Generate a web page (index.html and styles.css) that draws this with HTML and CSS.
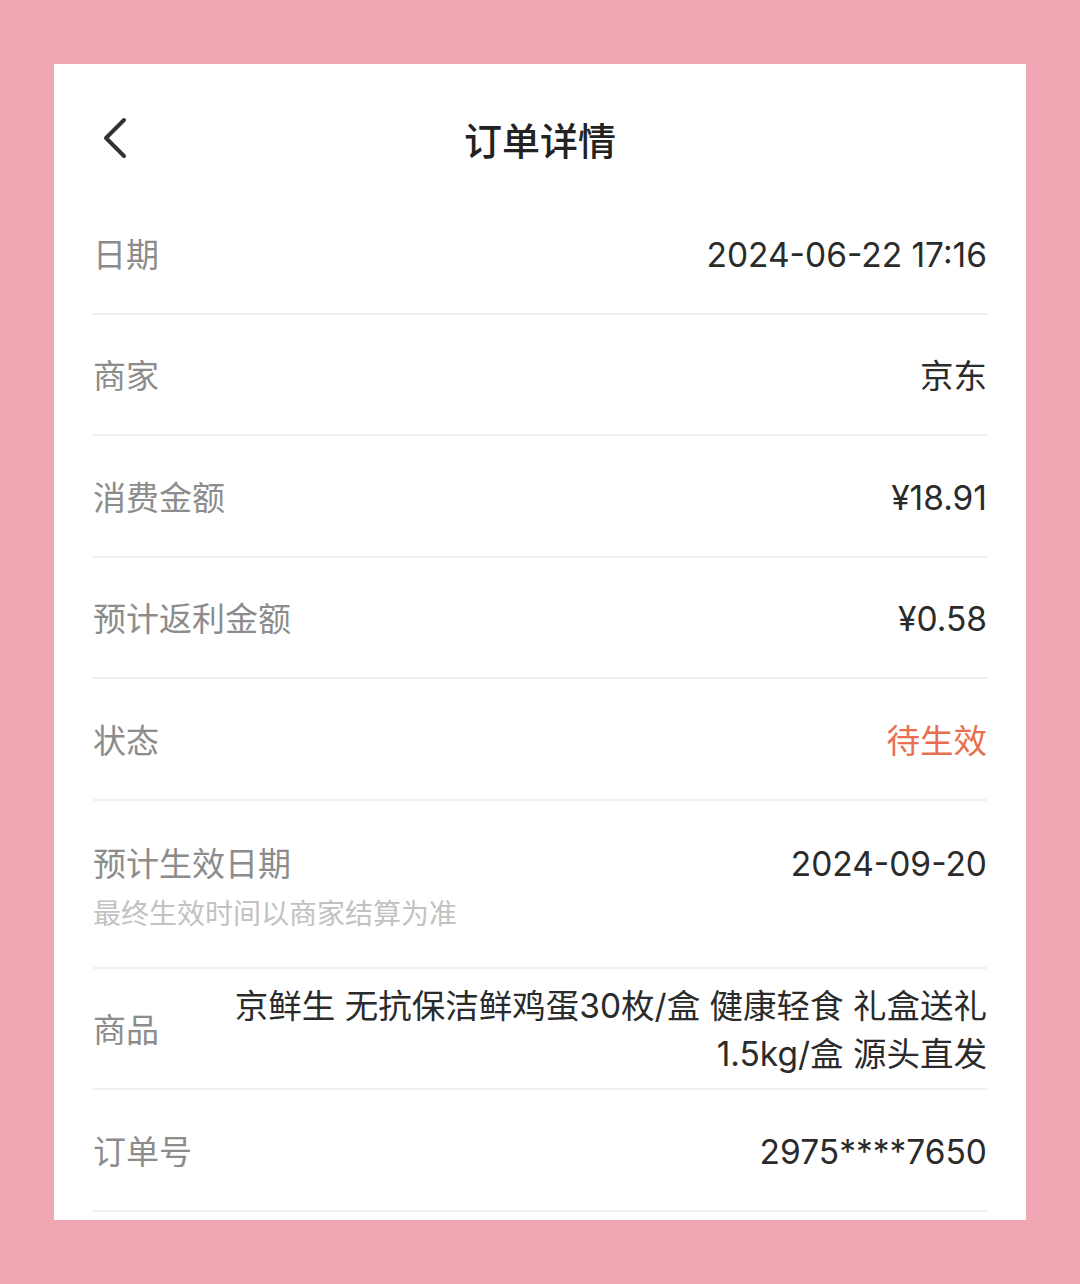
FILE: index.html
```html
<!DOCTYPE html>
<html lang="zh-CN">
<head>
<meta charset="utf-8">
<title>订单详情</title>
<link rel="stylesheet" href="styles.css">
</head>
<body>
<div class="card">
  <div class="header">
    <div class="back">
      <svg width="30" height="44" viewBox="0 0 30 44"><polyline points="23,4 5,22 23,40" fill="none" stroke="#333" stroke-width="4" stroke-linecap="round" stroke-linejoin="round"/></svg>
    </div>
    <div class="title">订单详情</div>
    <div></div>
  </div>
  <div class="row"><div class="label">日期</div><div class="value">2024-06-22 17:16</div></div>
  <div class="row"><div class="label">商家</div><div class="value">京东</div></div>
  <div class="row"><div class="label">消费金额</div><div class="value">¥18.91</div></div>
  <div class="row"><div class="label">预计返利金额</div><div class="value">¥0.58</div></div>
  <div class="row"><div class="label">状态</div><div class="value status">待生效</div></div>
  <div class="row row-tall"><div class="label-group"><div class="label">预计生效日期</div><div class="sub">最终生效时间以商家结算为准</div></div><div class="value">2024-09-20</div></div>
  <div class="row"><div class="label">商品</div><div class="value product">京鲜生 无抗保洁鲜鸡蛋30枚/盒 健康轻食 礼盒送礼 1.5kg/盒 源头直发</div></div>
  <div class="row"><div class="label">订单号</div><div class="value">2975****7650</div></div>
</div>
</body>
</html>
```
FILE: styles.css
```css
html, body { margin: 0; padding: 0; }
body {
  background: #f0a7b3;
  font-family: "Noto Sans CJK SC", sans-serif;
  width: 1080px;
  height: 1284px;
  overflow: hidden;
}
.card {
  margin: 64px 0 0 54px;
  width: 972px;
  height: 1156px;
  background: #fff;
  padding: 0 39px;
  box-sizing: border-box;
  overflow: hidden;
}
.header {
  height: 129px;
  padding-top: 19px;
  box-sizing: border-box;
  display: grid;
  grid-template-columns: 1fr auto 1fr;
  align-items: center;
  align-content: start;
}
.header > * { height: 110px; display: flex; align-items: center; }
.back { padding-left: 8px; }
.title { font-size: 38px; font-weight: 500; color: #222; }
.row {
  height: 121.5px;
  box-sizing: border-box;
  border-bottom: 2px solid #f0f0f0;
  display: flex;
  align-items: center;
  justify-content: space-between;
}
.label { font-size: 33px; color: #8c8c8c; line-height: 42px; }
.value {
  font-family: Inter, "Noto Sans CJK SC", sans-serif;
  font-size: 33.5px;
  color: #2b2b2b;
  line-height: 42px;
  text-align: right;
  padding-top: 4px;
}
.status { color: #e8704f; }
.row-tall { height: 168px; align-items: flex-start; padding-top: 40px; }
.row-tall .value { padding-top: 2px; }
.sub { font-size: 28px; color: #c2c2c2; line-height: 40px; margin-top: 9px; }
.product { max-width: 760px; line-height: 48px; }
```
